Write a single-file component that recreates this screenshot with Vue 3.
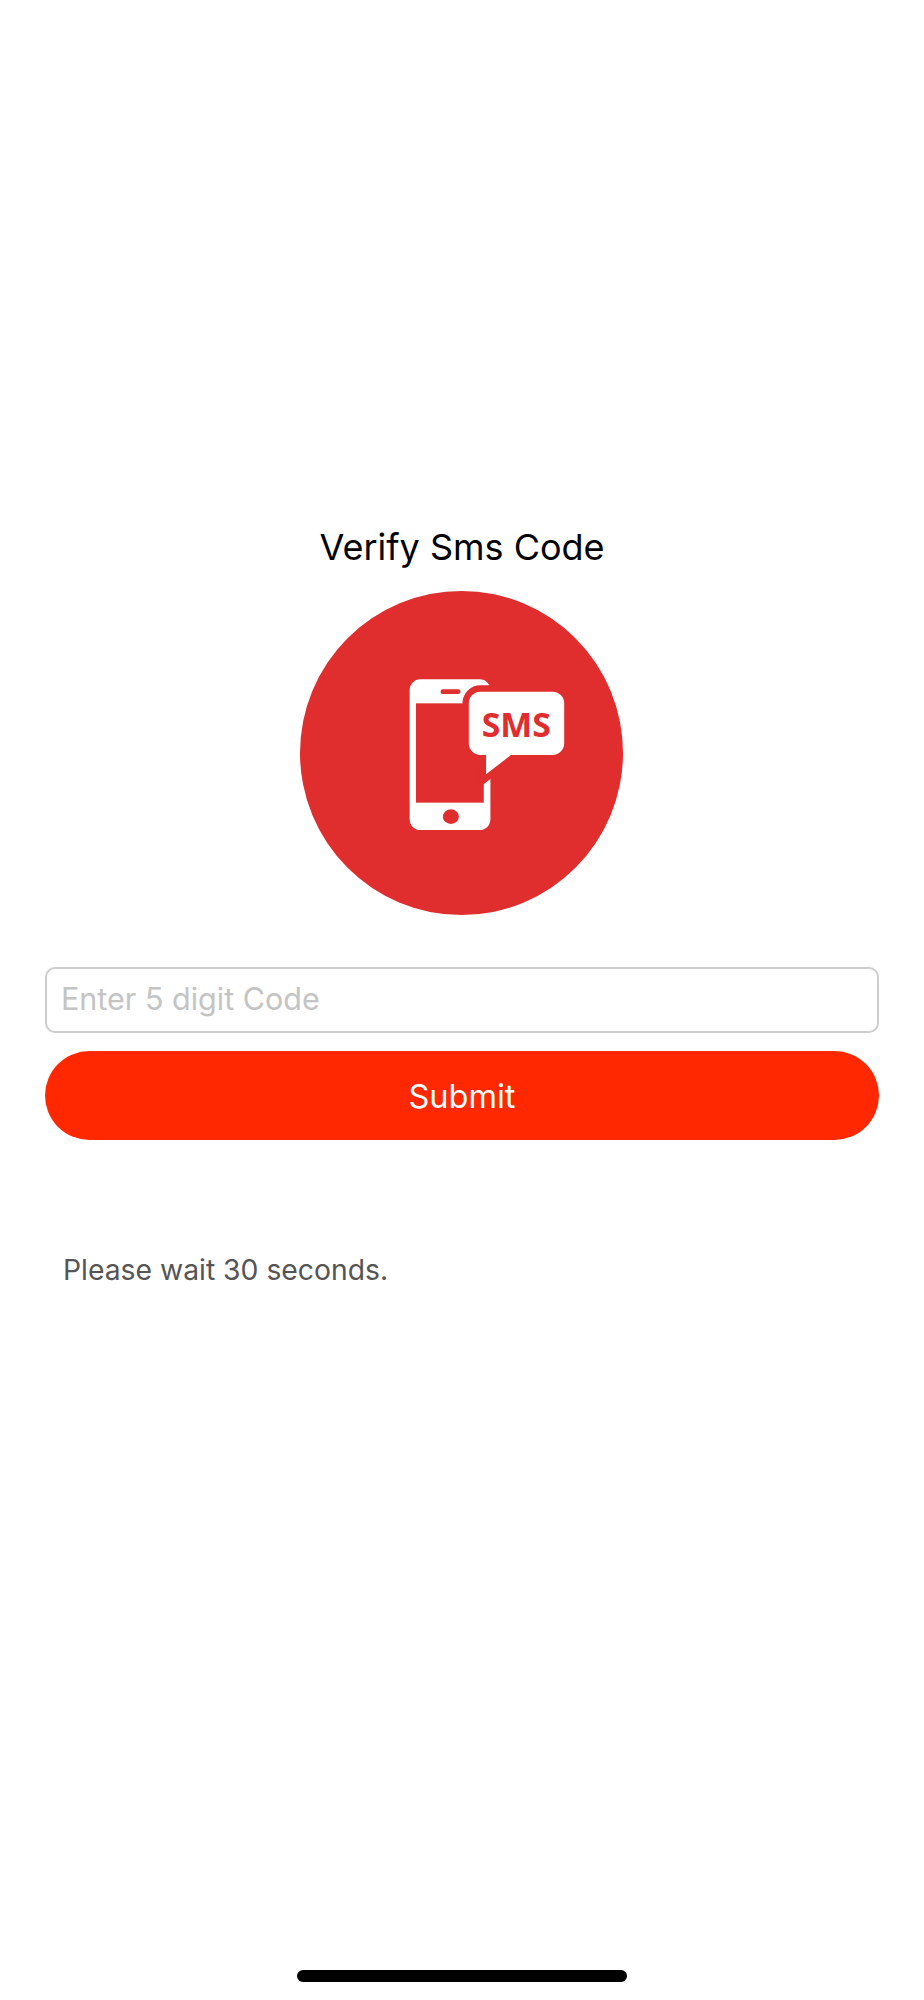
<script setup>
const title = 'Verify Sms Code'
</script>

<template>
  <main class="page">
    <h1 class="title">{{ title }}</h1>
    <svg class="badge" viewBox="0 0 972 972" width="323" height="324" preserveAspectRatio="none">
      <circle cx="486" cy="486" r="486" fill="#e02d2e" />
      <g transform="translate(270 207)">
        <rect x="60" y="58" width="243" height="452" rx="32" fill="#fff" />
        <rect x="79" y="130" width="204" height="298" fill="#e02d2e" />
        <rect x="153" y="88" width="60" height="14" rx="7" fill="#e02d2e" />
        <ellipse cx="184" cy="470" rx="24" ry="22" fill="#e02d2e" />
        <path
          d="M273 95H490A35 35 0 0 1 525 130V250A35 35 0 0 1 490 285H365L290 343V285H273A35 35 0 0 1 238 250V130A35 35 0 0 1 273 95Z"
          fill="#fff"
          stroke="#e02d2e"
          stroke-width="38"
          paint-order="stroke"
        />
        <text class="sms" x="381" y="230" text-anchor="middle">SMS</text>
      </g>
    </svg>
    <input class="code" type="text" placeholder="Enter 5 digit Code" />
    <button class="submit" type="button">Submit</button>
    <p class="wait">Please wait 30 seconds.</p>
    <div class="home-bar"></div>
  </main>
</template>

<style>
html, body { background: #fff; }
</style>

<style scoped>
.page {
  position: relative;
  box-sizing: border-box;
  height: 2000px;
  padding: 521px 45px 0;
  display: flex;
  flex-direction: column;
  align-items: stretch;
  background: #fff;
  font-family: Inter, "Liberation Sans", sans-serif;
}
.title {
  margin: 0;
  height: 52px;
  line-height: 52px;
  font-size: 36px;
  font-weight: 400;
  color: #000;
  text-align: center;
}
.badge {
  display: block;
  align-self: center;
  margin-top: 18px;
  margin-right: 1px;
}
.sms {
  font-family: "Open Sans", sans-serif;
  font-weight: 700;
  font-size: 102px;
  fill: #e02d2e;
}
.code {
  box-sizing: border-box;
  height: 66px;
  margin-top: 52px;
  padding: 0 14px 4px;
  border: 2px solid #cdcdcd;
  border-radius: 10px;
  outline: none;
  background: #fff;
  font-family: inherit;
  font-size: 30.5px;
}
.code::placeholder { color: #c4c4c4; opacity: 1; }
.submit {
  height: 89px;
  margin-top: 18px;
  padding: 1px 0 0;
  border: 0;
  border-radius: 45px;
  background: #ff2800;
  color: #fff;
  font-family: inherit;
  font-size: 32.5px;
}
.wait {
  margin: 112px 0 0 18px;
  line-height: 36px;
  font-size: 28.3px;
  color: #555;
}
.home-bar {
  position: absolute;
  left: 297px;
  top: 1970px;
  width: 330px;
  height: 12px;
  border-radius: 6px;
  background: #000;
}
</style>
